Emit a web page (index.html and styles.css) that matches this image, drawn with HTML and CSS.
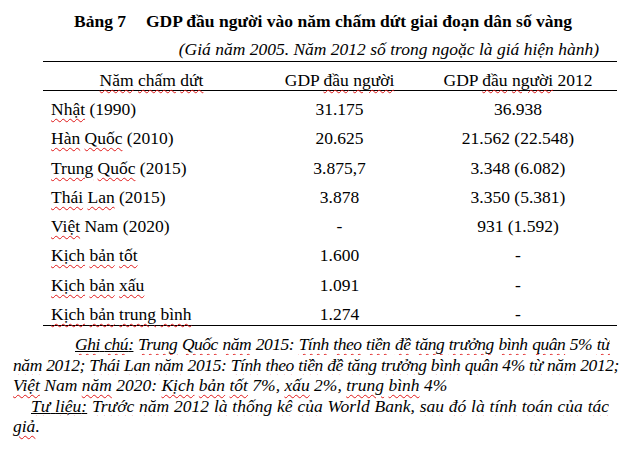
FILE: index.html
```html
<!DOCTYPE html>
<html lang="vi">
<head>
<meta charset="utf-8">
<title>Bảng 7</title>
<link rel="stylesheet" href="styles.css">
</head>
<body>
<div class="page">
  <h1 class="title"><span class="label">Bảng 7</span><span>GDP đầu người vào năm chấm dứt giai đoạn dân số vàng</span></h1>
  <p class="sub">(Giá năm 2005. Năm 2012 số trong ngoặc là giá hiện hành)</p>
  <table class="data">
    <colgroup>
      <col class="c1"><col class="c2"><col class="c3">
    </colgroup>
    <thead>
      <tr>
        <th><span class="sp">Năm</span> <span class="sp">chấm</span> <span class="sp">dứt</span></th>
        <th>GDP <span class="sp">đầu</span> <span class="sp">người</span></th>
        <th>GDP <span class="sp">đầu</span> <span class="sp">người</span> 2012</th>
      </tr>
    </thead>
    <tbody>
      <tr><td><span class="sp">Nhật</span> (1990)</td><td>31.175</td><td>36.938</td></tr>
      <tr><td><span class="sp">Hàn</span> <span class="sp">Quốc</span> (2010)</td><td>20.625</td><td>21.562 (22.548)</td></tr>
      <tr><td><span class="sp">Trung</span> <span class="sp">Quốc</span> (2015)</td><td>3.875,7</td><td>3.348 (6.082)</td></tr>
      <tr><td><span class="sp">Thái</span> <span class="sp">Lan</span> (2015)</td><td>3.878</td><td>3.350 (5.381)</td></tr>
      <tr><td><span class="sp">Việt</span> Nam (2020)</td><td>-</td><td>931 (1.592)</td></tr>
      <tr><td><span class="sp">Kịch</span> <span class="sp">bản</span> <span class="sp">tốt</span></td><td>1.600</td><td>-</td></tr>
      <tr><td><span class="sp">Kịch</span> <span class="sp">bản</span> <span class="sp">xấu</span></td><td>1.091</td><td>-</td></tr>
      <tr class="last"><td><span class="sp">Kịch</span> <span class="sp">bản</span> <span class="sp">trung</span> <span class="sp">bình</span></td><td>1.274</td><td>-</td></tr>
    </tbody>
  </table>
  <div class="notes">
    <div class="note-first">
      <span class="line line-1"><span class="ul"><span class="sp">Ghi</span> <span class="sp">chú</span>:</span> <span class="sp">Trung</span> <span class="sp">Quốc</span> <span class="sp">năm</span> 2015: <span class="sp">Tính</span> <span class="sp">theo</span> <span class="sp">tiền</span> <span class="sp">đề</span> <span class="sp">tăng</span> <span class="sp">trưởng</span> <span class="sp">bình</span> <span class="sp">quân</span> 5% <span class="sp">từ</span></span>
      <span class="line line-2"><span class="sp">năm</span> 2012; <span class="sp">Thái</span> <span class="sp">Lan</span> <span class="sp">năm</span> 2015: <span class="sp">Tính</span> <span class="sp">theo</span> <span class="sp">tiền</span> <span class="sp">đề</span> <span class="sp">tăng</span> <span class="sp">trưởng</span> <span class="sp">bình</span> <span class="sp">quân</span> 4% <span class="sp">từ</span> <span class="sp">năm</span> 2012;</span>
      <span class="line line-3"><span class="sp">Việt</span> Nam <span class="sp">năm</span> 2020: <span class="sp">Kịch</span> <span class="sp">bản</span> <span class="sp">tốt</span> 7%, <span class="sp">xấu</span> 2%, <span class="sp">trung</span> <span class="sp">bình</span> 4%</span>
    </div>
    <div class="note-second">
      <span class="line line-4"><span class="ul"><span class="sp">Tư</span> <span class="sp">liệu</span>:</span> <span class="sp">Trước</span> <span class="sp">năm</span> 2012 <span class="sp">là</span> <span class="sp">thống</span> <span class="sp">kê</span> <span class="sp">của</span> World Bank, <span class="sp">sau</span> <span class="sp">đó</span> <span class="sp">là</span> <span class="sp">tính</span> <span class="sp">toán</span> <span class="sp">của</span> <span class="sp">tác</span></span>
      <span class="line line-5"><span class="sp">giả</span>.</span>
    </div>
  </div>
</div>
</body>
</html>
```
FILE: styles.css
```css
html, body {
  margin: 0;
  padding: 0;
  background: #ffffff;
}

body {
  font-family: "Liberation Serif", "Times New Roman", serif;
  font-size: 17.5px;
  line-height: 20px;
  color: #000000;
}

.page {
  width: 637px;
  height: 450px;
  overflow: hidden;
}

.title {
  margin: 11px 0 0 0;
  padding-left: 74px;
  font-size: 17.5px;
  line-height: 20px;
  font-weight: bold;
  white-space: nowrap;
}

.title .label {
  display: inline-block;
  width: 72px;
}

.sub {
  margin: 8px 0 0 0;
  padding-right: 38px;
  text-align: right;
  font-style: italic;
  white-space: nowrap;
}

.data {
  margin: 2px 0 0 43px;
  width: 574px;
  border-collapse: collapse;
  table-layout: fixed;
  border-top: 1px solid #000;
}

.c1 { width: 217px; }
.c2 { width: 159px; }
.c3 { width: 198px; }

.data th {
  font-weight: normal;
  text-align: center;
  padding: 8px 0 0 0;
  line-height: 20px;
  border-bottom: 1px solid #000;
  white-space: nowrap;
}

.data td {
  padding: 8px 0 1.3px 0;
  line-height: 20px;
  text-align: center;
  white-space: nowrap;
}

.data td:first-child {
  text-align: left;
  padding-left: 8px;
}

.data tr.last td {
  border-bottom: 1px solid #000;
}

.notes {
  margin-top: 8px;
  padding-left: 13px;
  font-style: italic;
  line-height: 20.4px;
}

.line {
  display: block;
  white-space: nowrap;
}

.line-1,
.line-2,
.line-4 {
  white-space: normal;
  text-align: justify;
  text-align-last: justify;
  overflow: hidden;
  height: 20.4px;
}

.line-1 {
  margin-left: 62px;
  width: 535px;
  letter-spacing: -0.5px;
}

.line-2 {
  width: 606px;
  letter-spacing: -0.4px;
}

.line-4 {
  margin-left: 18px;
  width: 578px;
}

.sp {
  text-decoration-line: underline;
  text-decoration-style: wavy;
  text-decoration-color: #e01818;
  text-decoration-thickness: 1px;
  text-underline-offset: 3px;
}

.ul {
  text-decoration-line: underline;
  text-decoration-color: #000;
  text-decoration-thickness: 1px;
  text-underline-offset: 1px;
}
```
